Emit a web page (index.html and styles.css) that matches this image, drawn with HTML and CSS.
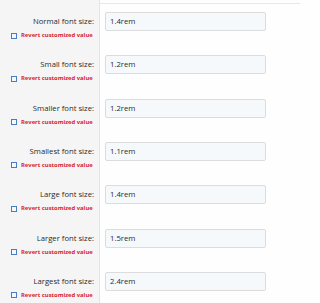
FILE: index.html
```html
<!DOCTYPE html>
<html>
<head>
<meta charset="utf-8">
<link rel="stylesheet" href="styles.css">
</head>
<body>
<div class="page">
  <div class="topline"></div>
  <div class="rows">
    <div class="row">
      <div class="labelcol">
        <div class="label">Normal font size:</div>
        <div class="revert"><span class="box"></span><span>Revert customized value</span></div>
      </div>
      <div class="fieldcol"><div class="input">1.4rem</div></div>
    </div>
    <div class="row">
      <div class="labelcol">
        <div class="label">Small font size:</div>
        <div class="revert"><span class="box"></span><span>Revert customized value</span></div>
      </div>
      <div class="fieldcol"><div class="input">1.2rem</div></div>
    </div>
    <div class="row">
      <div class="labelcol">
        <div class="label">Smaller font size:</div>
        <div class="revert"><span class="box"></span><span>Revert customized value</span></div>
      </div>
      <div class="fieldcol"><div class="input">1.2rem</div></div>
    </div>
    <div class="row">
      <div class="labelcol">
        <div class="label">Smallest font size:</div>
        <div class="revert"><span class="box"></span><span>Revert customized value</span></div>
      </div>
      <div class="fieldcol"><div class="input">1.1rem</div></div>
    </div>
    <div class="row">
      <div class="labelcol">
        <div class="label">Large font size:</div>
        <div class="revert"><span class="box"></span><span>Revert customized value</span></div>
      </div>
      <div class="fieldcol"><div class="input">1.4rem</div></div>
    </div>
    <div class="row">
      <div class="labelcol">
        <div class="label">Larger font size:</div>
        <div class="revert"><span class="box"></span><span>Revert customized value</span></div>
      </div>
      <div class="fieldcol"><div class="input">1.5rem</div></div>
    </div>
    <div class="row">
      <div class="labelcol">
        <div class="label">Largest font size:</div>
        <div class="revert"><span class="box"></span><span>Revert customized value</span></div>
      </div>
      <div class="fieldcol"><div class="input">2.4rem</div></div>
    </div>
  </div>
</div>
</body>
</html>
```
FILE: styles.css
```css
html, body {
  margin: 0;
  padding: 0;
  background: #fefefe;
}
body {
  font-family: "Open Sans", "Noto Sans", sans-serif;
  width: 300px;
  height: 303px;
  overflow: hidden;
}
.page {
  height: 303px;
  background: linear-gradient(to right, #f5f5f5 0, #f5f5f5 99px, #e4e4e4 99px, #e4e4e4 100px, #fefefe 100px);
}
.topline {
  height: 3px;
  margin-left: 100px;
  border-bottom: 1px solid #e8e8e8;
}
.rows {
  display: flex;
  flex-direction: column;
  padding-top: 8px;
}
.row {
  display: flex;
  height: 43.33px;
}
.labelcol {
  width: 99px;
  box-sizing: border-box;
  padding-right: 5px;
  padding-top: 2px;
  display: flex;
  flex-direction: column;
  align-items: flex-end;
}
.label {
  font-size: 7.7px;
  color: #2a2a2a;
  line-height: 14px;
  white-space: nowrap;
}
.revert {
  margin-top: 3px;
  align-self: flex-start;
  margin-left: 11px;
  display: flex;
  align-items: center;
  gap: 4px;
  font-size: 5.85px;
  font-weight: bold;
  color: #d8242c;
  white-space: nowrap;
  line-height: 9px;
}
.box {
  width: 4px;
  height: 4px;
  border: 1px solid #4a7cc4;
  background: #f4f8fd;
}
.fieldcol {
  padding-left: 6px;
}
.input {
  width: 155px;
  height: 17px;
  border: 1px solid #dcdcdc;
  border-radius: 2px;
  background: #f6f9fc;
  font-size: 7.7px;
  color: #2a2a2a;
  line-height: 17px;
  padding-left: 4px;
  box-sizing: content-box;
}
```
